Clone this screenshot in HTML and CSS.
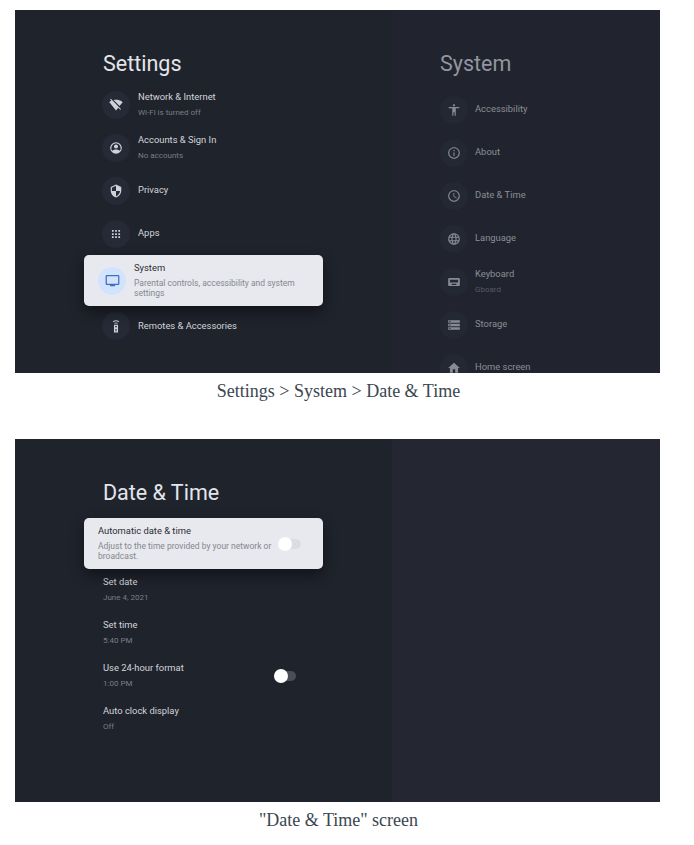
FILE: index.html
```html
<!DOCTYPE html>
<html lang="en">
<head>
    <meta charset="UTF-8">
    <meta name="viewport" content="width=device-width, initial-scale=1.0">
    <title>Settings - Date &amp; Time</title>
    <link rel="stylesheet" href="styles.css">
</head>
<body>
    <!-- Settings > System -->
    <figure class="shot">
        <div class="screen">
            <div class="pane">
                <h2 class="pane-title">Settings</h2>
                <div class="row">
                    <span class="icon"><svg viewBox="0 0 24 24"><path d="M23.64 7c-.45-.34-4.93-4-11.64-4-1.5 0-2.89.19-4.15.48L18.18 13.8 23.64 7zm-6.6 8.22L3.27 1.44 2 2.72l2.05 2.06C1.91 5.76.59 6.82.36 7l11.63 14.49.01.01.01-.01 3.9-4.86 3.32 3.32 1.27-1.27-3.46-3.46z"/></svg></span>
                    <div class="text"><div class="name">Network &amp; Internet</div><div class="sub">Wi-Fi is turned off</div></div>
                </div>
                <div class="row">
                    <span class="icon"><svg viewBox="0 0 24 24"><path fill-rule="evenodd" d="M12 2a10 10 0 1 0 0 20 10 10 0 0 0 0-20zm0 2a8 8 0 0 1 6.3 12.9c-1.4-1.7-4.3-2.4-6.3-2.4s-4.9.7-6.3 2.4A8 8 0 0 1 12 4zm0 2a3.5 3.5 0 1 0 0 7 3.5 3.5 0 0 0 0-7z"/></svg></span>
                    <div class="text"><div class="name">Accounts &amp; Sign In</div><div class="sub">No accounts</div></div>
                </div>
                <div class="row">
                    <span class="icon"><svg viewBox="0 0 24 24"><path d="M12 1L3 5v6c0 5.55 3.84 10.74 9 12 5.16-1.26 9-6.45 9-12V5l-9-4zm0 10.99h7c-.53 4.12-3.28 7.79-7 8.94V12H5V6.3l7-3.11v8.8z"/></svg></span>
                    <div class="text"><div class="name">Privacy</div></div>
                </div>
                <div class="row">
                    <span class="icon"><svg viewBox="0 0 24 24"><path d="M5 8h3V5H5v3zm5.5 11h3v-3h-3v3zM5 19h3v-3H5v3zm0-5.5h3v-3H5v3zm5.5 0h3v-3h-3v3zM16 5v3h3V5h-3zm-5.500 3h3V5h-3v3zm5.500 5.500h3v-3h-3v3zm0 5.500h3v-3h-3v3z"/></svg></span>
                    <div class="text"><div class="name">Apps</div></div>
                </div>
                <div class="card card-system">
                    <span class="icon"><svg viewBox="0 0 24 24"><path d="M21 3H3c-1.1 0-2 .9-2 2v12c0 1.1.9 2 2 2h5v2h8v-2h5c1.1 0 1.99-.9 1.99-2L23 5c0-1.1-.9-2-2-2zm0 14H3V5h18v12z"/></svg></span>
                    <div class="text"><div class="name">System</div><div class="sub">Parental controls, accessibility and system settings</div></div>
                </div>
                <div class="row row-remotes">
                    <span class="icon"><svg viewBox="0 0 24 24"><path fill-rule="evenodd" d="M8.500 10h7v13h-7zM12 11.500a1.500 1.500 0 1 0 0 3 1.500 1.500 0 0 0 0-3zM10.500 17v1.300h3V17zm0 2.500v1.300h3v-1.300z"/><path d="M6.500 4.200C9.600 1.300 14.400 1.300 17.500 4.200l-1.100 1.200c-2.500-2.300-6.300-2.300-8.800 0zM9 7c1.700-1.400 4.300-1.400 6 0l-1 1.200c-1.200-.9-2.800-.9-4 0z"/></svg></span>
                    <div class="text"><div class="name">Remotes &amp; Accessories</div></div>
                </div>
            </div>
            <div class="pane pane-next">
                <h2 class="pane-title">System</h2>
                <div class="row">
                    <span class="icon"><svg viewBox="0 0 24 24"><path d="M12 2c1.1 0 2 .9 2 2s-.9 2-2 2-2-.9-2-2 .9-2 2-2zm9 7h-6v13h-2v-6h-2v6H9V9H3V7h18v2z"/></svg></span>
                    <div class="text"><div class="name">Accessibility</div></div>
                </div>
                <div class="row">
                    <span class="icon"><svg viewBox="0 0 24 24"><path d="M11 7h2v2h-2zm0 4h2v6h-2zm1-9C6.48 2 2 6.48 2 12s4.48 10 10 10 10-4.48 10-10S17.52 2 12 2zm0 18c-4.41 0-8-3.59-8-8s3.59-8 8-8 8 3.59 8 8-3.59 8-8 8z"/></svg></span>
                    <div class="text"><div class="name">About</div></div>
                </div>
                <div class="row">
                    <span class="icon"><svg viewBox="0 0 24 24"><path d="M11.99 2C6.47 2 2 6.48 2 12s4.47 10 9.99 10C17.52 22 22 17.52 22 12S17.52 2 11.99 2zM12 20c-4.42 0-8-3.58-8-8s3.58-8 8-8 8 3.58 8 8-3.58 8-8 8zm.5-13H11v6l5.25 3.15.75-1.23-4.5-2.67z"/></svg></span>
                    <div class="text"><div class="name">Date &amp; Time</div></div>
                </div>
                <div class="row">
                    <span class="icon"><svg viewBox="0 0 24 24"><path d="M11.99 2C6.47 2 2 6.48 2 12s4.47 10 9.99 10C17.52 22 22 17.52 22 12S17.52 2 11.99 2zm6.93 6h-2.95c-.32-1.25-.78-2.45-1.38-3.56 1.84.63 3.37 1.91 4.33 3.56zM12 4.04c.83 1.2 1.48 2.53 1.91 3.96h-3.82c.43-1.43 1.08-2.76 1.91-3.96zM4.26 14C4.1 13.36 4 12.69 4 12s.1-1.36.26-2h3.38c-.08.66-.14 1.32-.14 2 0 .68.06 1.34.14 2H4.26zm.82 2h2.95c.32 1.25.78 2.45 1.38 3.56-1.84-.63-3.37-1.9-4.33-3.56zm2.95-8H5.08c.96-1.66 2.49-2.93 4.33-3.56C8.81 5.55 8.35 6.75 8.03 8zM12 19.96c-.83-1.2-1.48-2.53-1.91-3.96h3.82c-.43 1.43-1.08 2.76-1.91 3.96zM14.34 14H9.66c-.09-.66-.16-1.32-.16-2 0-.68.07-1.35.16-2h4.68c.09.65.16 1.32.16 2 0 .68-.07 1.34-.16 2zm.25 5.56c.6-1.11 1.06-2.31 1.38-3.56h2.95c-.96 1.65-2.49 2.93-4.33 3.56zM16.36 14c.08-.66.14-1.32.14-2 0-.68-.06-1.34-.14-2h3.38c.16.64.26 1.31.26 2s-.1 1.36-.26 2h-3.38z"/></svg></span>
                    <div class="text"><div class="name">Language</div></div>
                </div>
                <div class="row">
                    <span class="icon"><svg viewBox="0 0 24 24"><path d="M20 5H4c-1.100 0-1.990.900-1.990 2L2 17c0 1.100.900 2 2 2h16c1.100 0 2-.900 2-2V7c0-1.100-.900-2-2-2zM5 8h14v5H5V8zm3 7h8v2H8v-2z"/></svg></span>
                    <div class="text"><div class="name">Keyboard</div><div class="sub">Gboard</div></div>
                </div>
                <div class="row">
                    <span class="icon"><svg viewBox="0 0 24 24"><path d="M2 20h20v-4H2v4zm2-3h2v2H4v-2zM2 4v4h20V4H2zm4 3H4V5h2v2zm-4 7h20v-4H2v4zm2-3h2v2H4v-2z"/></svg></span>
                    <div class="text"><div class="name">Storage</div></div>
                </div>
                <div class="row">
                    <span class="icon"><svg viewBox="0 0 24 24"><path d="M10 20v-6h4v6h5v-8h3L12 3 2 12h3v8z"/></svg></span>
                    <div class="text"><div class="name">Home screen</div></div>
                </div>
            </div>
        </div>
        <figcaption>Settings &gt; System &gt; Date &amp; Time</figcaption>
    </figure>

    <!-- Date & Time -->
    <figure class="shot">
        <div class="screen">
            <div class="pane">
                <h2 class="pane-title">Date &amp; Time</h2>
                <div class="card card-auto">
                    <div class="text"><div class="name">Automatic date &amp; time</div><div class="sub">Adjust to the time provided by your network or broadcast.</div></div>
                    <span class="toggle toggle-light"></span>
                </div>
                <div class="row row-plain">
                    <div class="text"><div class="name">Set date</div><div class="sub">June 4, 2021</div></div>
                </div>
                <div class="row row-plain">
                    <div class="text"><div class="name">Set time</div><div class="sub">5:40 PM</div></div>
                </div>
                <div class="row row-plain">
                    <div class="text"><div class="name">Use 24-hour format</div><div class="sub">1:00 PM</div></div>
                    <span class="toggle"></span>
                </div>
                <div class="row row-plain">
                    <div class="text"><div class="name">Auto clock display</div><div class="sub">Off</div></div>
                </div>
            </div>
            <div class="pane pane-empty"></div>
        </div>
        <figcaption>"Date &amp; Time" screen</figcaption>
    </figure>
</body>
</html>
```

FILE: styles.css
```css
body {
    margin: 0;
    padding-top: 10px;
    background-color: white;
    font-family: Roboto, Arial, sans-serif;
}

.shot {
    margin: 0 34px 0 15px;
    height: 429px;
}

.screen {
    display: flex;
    height: 363px;
    overflow: hidden;
    background-color: #1f232c;
}

figcaption {
    padding: 5.5px 0 0 2px;
    font-family: "Liberation Serif", serif;
    font-size: 18px;
    line-height: 24px;
    text-align: center;
    color: #3b4650;
}

.pane {
    width: 377px;
    padding-left: 88px;
    box-sizing: border-box;
}

.pane-next {
    flex: 1;
    padding-left: 48px;
    background-color: #21242e;
}

.pane-empty {
    flex: 1;
    padding: 0;
    background-color: #242732;
}

.pane-title {
    margin: 0;
    padding-top: 40px;
    height: 34px;
    font-size: 21.5px;
    font-weight: 400;
    line-height: 28px;
    color: #e4e6ea;
}

.pane-next .pane-title {
    height: 38px;
    color: #93969e;
}

.row {
    display: flex;
    align-items: center;
    width: 220px;
    height: 42.75px;
}

.pane-next .row {
    height: 43px;
}

.row .text {
    margin-bottom: 2px;
}

.row-remotes {
    margin-top: -1px;
}

.icon {
    display: flex;
    align-items: center;
    justify-content: center;
    flex: none;
    width: 28px;
    height: 28px;
    margin: 0 8px 0 -1px;
    border-radius: 50%;
    background-color: #252a36;
}

.icon svg {
    width: 14px;
    height: 14px;
    fill: #cfd2d8;
}

.name {
    font-size: 9.4px;
    line-height: 13px;
    color: #d3d5da;
}

.sub {
    margin-top: 5px;
    font-size: 8px;
    line-height: 10px;
    color: #7b7e86;
}

.pane-next .icon {
    margin: 0 7px 0 0;
    background-color: #242833;
}

.pane-next .icon svg {
    fill: #868a93;
}

.pane-next .name {
    color: #8b8e95;
}

.pane-next .sub {
    color: #565a63;
}

.card {
    display: flex;
    align-items: center;
    width: 239px;
    height: 51px;
    margin-left: -19px;
    box-sizing: border-box;
    border-radius: 5px;
    background-color: #e8e9ee;
    box-shadow: 0 6px 14px rgba(0, 0, 0, 0.45);
}

.card .text {
    margin-bottom: 2px;
}

.card .name {
    color: #2a2c33;
}

.card .sub {
    margin-top: 4px;
    font-size: 8.5px;
    color: #85878f;
}

.card-system {
    position: relative;
    padding: 0 20px 0 14px;
}

.card-system .icon {
    margin: 0 8px 0 0;
    background-color: #d3e3fd;
}

.card-system .icon svg {
    width: 15px;
    height: 15px;
    fill: #3f6fc4;
}

.card-auto {
    justify-content: space-between;
    position: relative;
    margin-top: 5px;
    padding: 0 22px 0 14px;
}

.card-auto .text {
    width: 176px;
}

.row-plain {
    justify-content: space-between;
    width: 193px;
}

.toggle {
    display: block;
    position: relative;
    flex: none;
    width: 22px;
    height: 10px;
    border-radius: 5px;
    background-color: #4b4e57;
}

/* knob sticks out of the track */
.toggle::before {
    content: "";
    position: absolute;
    left: 0;
    top: -2px;
    width: 14px;
    height: 14px;
    border-radius: 50%;
    background-color: white;
}

.toggle-light {
    width: 23px;
    background-color: #dcdde2;
}
```
